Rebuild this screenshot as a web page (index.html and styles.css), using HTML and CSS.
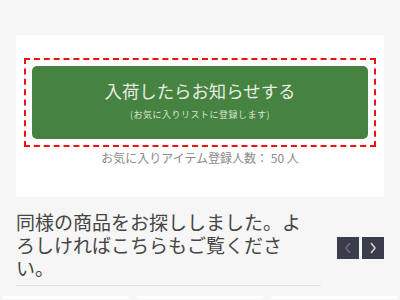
FILE: index.html
```html
<!DOCTYPE html>
<html lang="ja">
<head>
<meta charset="utf-8">
<link rel="stylesheet" href="styles.css">
</head>
<body>
<div class="page">
  <div class="card">
    <div class="dash">
      <div class="btn">
        <div class="btn-main">入荷したらお知らせする</div>
        <div class="btn-sub">(お気に入りリストに登録します)</div>
      </div>
    </div>
    <div class="count">お気に入りアイテム登録人数： 50 人</div>
  </div>
  <div class="similar">
    <div class="similar-head">
      <h2 class="title">同様の商品をお探ししました。よろしければこちらもご覧ください。</h2>
    </div>
    <div class="nav">
      <span class="nav-btn disabled"><svg width="8" height="12" viewBox="0 0 8 12"><path d="M6 1 L2 6 L6 11" fill="none" stroke="currentColor" stroke-width="1.6"/></svg></span>
      <span class="nav-btn"><svg width="8" height="12" viewBox="0 0 8 12"><path d="M2 1 L6 6 L2 11" fill="none" stroke="currentColor" stroke-width="1.6"/></svg></span>
    </div>
  </div>
  <div class="items">
    <div class="item"></div>
    <div class="item"></div>
    <div class="item"></div>
  </div>
</div>
</body>
</html>
```
FILE: styles.css
```css
html, body {
  margin: 0;
  padding: 0;
  background: #f6f6f6;
  font-family: "Noto Sans CJK JP", "Noto Sans", sans-serif;
  overflow: hidden;
}
.page {
  padding-top: 35px;
  width: 400px;
  height: 300px;
  box-sizing: border-box;
  overflow: hidden;
}
.card {
  margin: 0 16px;
  height: 162px;
  box-sizing: border-box;
  padding: 23px 8px 0;
  background: #fff;
}
.dash {
  border: 2px dashed #f01010;
  padding: 6px;
}
.btn {
  height: 73px;
  box-sizing: border-box;
  padding-top: 13px;
  background: #468240;
  border-radius: 5px;
  display: flex;
  flex-direction: column;
  align-items: center;
  color: #e6eee2;
}
.btn-main {
  font-size: 17.4px;
  line-height: 24px;
}
.btn-sub {
  font-size: 9px;
  line-height: 14px;
  margin-top: 5px;
  letter-spacing: 0.5px;
  color: #d9e5d4;
}
.count {
  margin-top: 3px;
  text-align: center;
  font-size: 12px;
  line-height: 16px;
  color: #8a8a8a;
}
.similar {
  margin: 13px 16px 0;
  display: flex;
  align-items: center;
  justify-content: space-between;
}
.similar-head {
  width: 305px;
  border-bottom: 1px solid #e2e2e2;
  padding-bottom: 6px;
}
.title {
  margin: 0;
  width: 295px;
  font-size: 19px;
  line-height: 23px;
  font-weight: normal;
  color: #454545;
}
.nav {
  display: flex;
  gap: 3px;
}
.nav-btn {
  width: 22px;
  height: 22px;
  background: #393c49;
  display: flex;
  align-items: center;
  justify-content: center;
  color: #d0d2d8;
}
.nav-btn.disabled {
  color: #6a6d78;
}
.items {
  margin-top: 10px;
  padding-left: 3px;
  display: flex;
  gap: 8px;
}
.item {
  width: 126px;
  height: 3px;
  background: #fff;
}
```
